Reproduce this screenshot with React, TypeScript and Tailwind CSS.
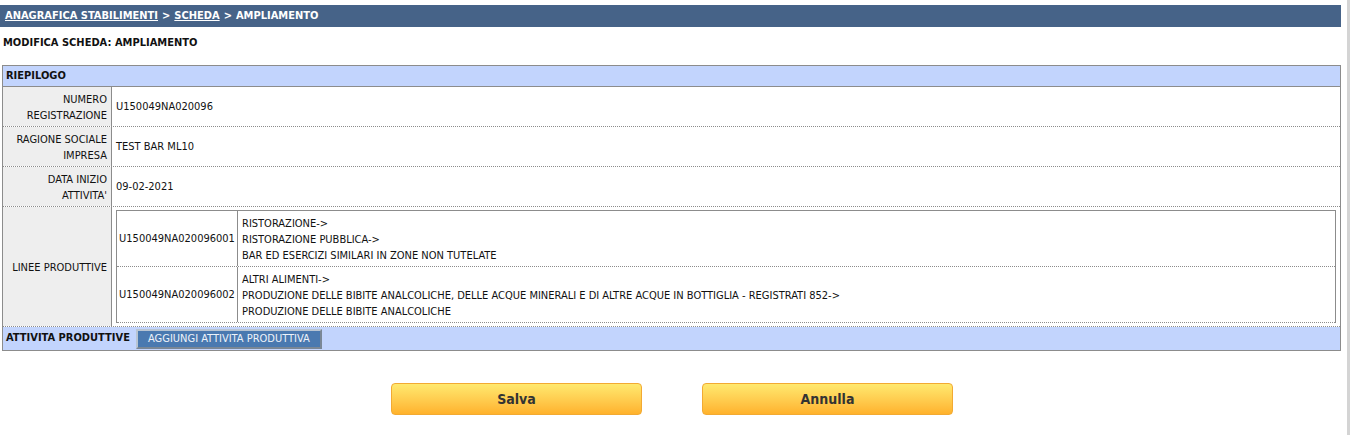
const font = { fontFamily: '"DejaVu Sans Condensed", "DejaVu Sans", sans-serif' };

function LabelRow({ label, children }: { label: React.ReactNode; children: React.ReactNode }) {
  return (
    <div className="flex border-b border-dotted border-[#8c8c8c]">
      <div className="w-[109px] shrink-0 bg-[#eeeeee] border-r border-[#8c8c8c] flex items-center justify-end text-right pr-[4px] pt-[2px] leading-[16px]">
        {label}
      </div>
      <div className="flex-1 flex items-center pl-[4px]">{children}</div>
    </div>
  );
}

const linee = [
  {
    code: 'U150049NA020096001',
    lines: ['RISTORAZIONE->', 'RISTORAZIONE PUBBLICA->', 'BAR ED ESERCIZI SIMILARI IN ZONE NON TUTELATE'],
  },
  {
    code: 'U150049NA020096002',
    lines: [
      'ALTRI ALIMENTI->',
      'PRODUZIONE DELLE BIBITE ANALCOLICHE, DELLE ACQUE MINERALI E DI ALTRE ACQUE IN BOTTIGLIA - REGISTRATI 852->',
      'PRODUZIONE DELLE BIBITE ANALCOLICHE',
    ],
  },
];

export default function App() {
  return (
    <div className="relative w-[1350px] h-[435px] bg-white text-[11px] text-[#111] overflow-hidden" style={font}>
      {/* scrollbar strip */}
      <div className="absolute top-0 right-0 w-[3px] h-full bg-[#d4d4d4]" />

      <div className="w-[1341px] pt-[5px]">
        {/* Breadcrumb */}
        <div className="h-[22px] bg-[#466388] flex items-center pl-[5px] font-bold text-white">
          <span className="underline">ANAGRAFICA STABILIMENTI</span>
          <span className="mx-[4px]">&gt;</span>
          <span className="underline">SCHEDA</span>
          <span className="mx-[4px]">&gt;</span>
          <span>AMPLIAMENTO</span>
        </div>

        <div className="pl-[3px] pt-[8px] h-[38px] font-bold">MODIFICA SCHEDA: AMPLIAMENTO</div>

        {/* Riepilogo */}
        <div className="ml-[2px] border border-[#8c8c8c]">
          <div className="h-[21px] bg-[#c2d4fd] border-b border-[#8c8c8c] flex items-center pl-[3px] pt-[1px] font-bold">
            RIEPILOGO
          </div>

          <LabelRow label={<span>NUMERO<br />REGISTRAZIONE</span>}>
            <div className="h-[39px] flex items-center pt-[1px]">U150049NA020096</div>
          </LabelRow>
          <LabelRow label={<span>RAGIONE SOCIALE<br />IMPRESA</span>}>
            <div className="h-[39px] flex items-center pt-[1px]">TEST BAR ML10</div>
          </LabelRow>
          <LabelRow label={<span>DATA INIZIO<br />ATTIVITA'</span>}>
            <div className="h-[39px] flex items-center pt-[1px]">09-02-2021</div>
          </LabelRow>
          <LabelRow label="LINEE PRODUTTIVE">
            <div className="flex-1 pt-[3px] pb-[3px] pr-[4px]">
              <div className="border border-b-0 border-[#8c8c8c]">
                {linee.map((l) => (
                  <div key={l.code} className="flex border-b border-dotted border-[#8c8c8c]">
                    <div className="w-[121px] shrink-0 border-r border-[#8c8c8c] flex items-center justify-center pt-[2px]">
                      {l.code}
                    </div>
                    <div className="flex-1 pl-[4px] pt-[5px] pb-[2px] leading-[16px]">
                      {l.lines.map((t) => (
                        <div key={t}>{t}</div>
                      ))}
                    </div>
                  </div>
                ))}
              </div>
            </div>
          </LabelRow>

          <div className="h-[23px] bg-[#c2d4fd] flex items-center pl-[3px]">
            <span className="font-bold">ATTIVITA PRODUTTIVE</span>
            <button
              className="ml-[6px] h-[20px] px-[10px] bg-[#4a79b0] text-[#eef3fa] border-2 border-t-[#b8c4d2] border-l-[#b8c4d2] border-b-[#7a8796] border-r-[#7a8796]"
              style={font}
            >
              AGGIUNGI ATTIVITA PRODUTTIVA
            </button>
          </div>
        </div>

        {/* Actions */}
        <div className="flex justify-center gap-[60px] mt-[32px] pr-[41px] pl-[44px]">
          {['Salva', 'Annulla'].map((b) => (
            <button
              key={b}
              className="w-[251px] h-[32px] rounded-[4px] border border-[#f2aa33] bg-gradient-to-b from-[#ffe96e] to-[#ffb22b] text-[14px] font-bold text-[#333]"
              style={font}
            >
              {b}
            </button>
          ))}
        </div>
      </div>
    </div>
  );
}
